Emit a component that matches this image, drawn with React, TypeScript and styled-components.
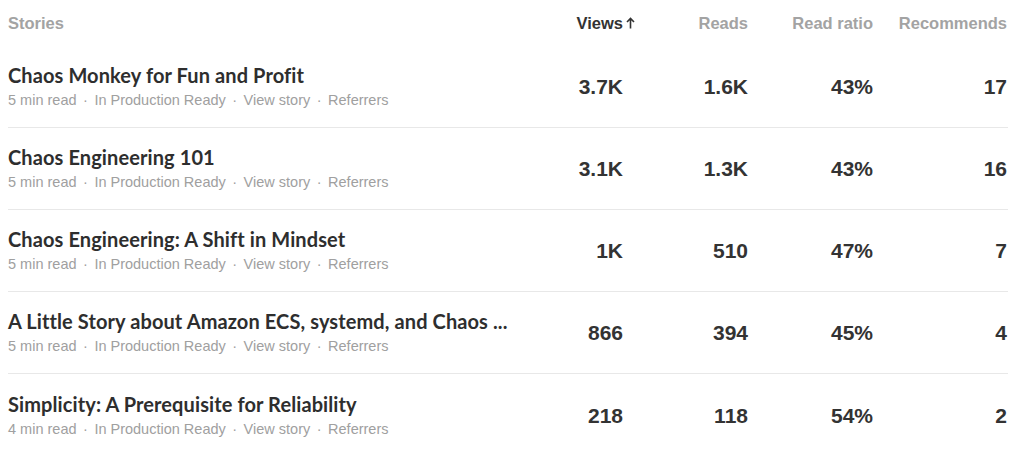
import React from "react";
import styled, { createGlobalStyle } from "styled-components";

const Global = createGlobalStyle`
  html, body { margin: 0; padding: 0; background: #fff; }
  body { font-family: "Liberation Sans", Arial, sans-serif; }
`;

const Table = styled.div`
  margin: 0 16px 0 8px;
  width: 1000px;
`;

const HeaderRow = styled.div`
  display: grid;
  grid-template-columns: 1fr 125px 125px 125px 135px;
  height: 46px;
  align-items: center;
  box-sizing: border-box;
`;

const HeadCell = styled.div<{ $active?: boolean; $left?: boolean; $pad?: number }>`
  position: relative;
  font-family: "Liberation Sans", Arial, sans-serif;
  font-weight: 700;
  font-size: 16.5px;
  color: ${(p) => (p.$active ? "#333" : "#a3a3a3")};
  text-align: ${(p) => (p.$left ? "left" : "right")};
  padding-right: ${(p) => p.$pad ?? 0}px;
`;

const SortArrow = styled.svg`
  position: absolute;
  right: -12px;
  top: 50%;
  margin-top: -6px;
  width: 9px;
  height: 12px;
`;

const Row = styled.div<{ $last?: boolean }>`
  display: grid;
  grid-template-columns: 1fr 125px 125px 125px 135px;
  height: 82px;
  align-items: center;
  box-sizing: border-box;
  border-bottom: ${(p) => (p.$last ? "none" : "1px solid #e8e8e8")};
`;

const StoryCell = styled.div`
  display: flex;
  flex-direction: column;
  gap: 4px;
  min-width: 0;
  margin-top: -1px;
`;

const Title = styled.div`
  font-family: Lato, "Liberation Sans", sans-serif;
  font-weight: 700;
  font-size: 20px;
  letter-spacing: 0.1px;
  color: #2e2e2e;
  white-space: nowrap;
  line-height: 24px;
`;

const Meta = styled.div`
  font-family: "Liberation Sans", Arial, sans-serif;
  font-size: 14.5px;
  color: #a0a0a0;
  line-height: 18px;
`;

const Dot = styled.span`
  padding: 0 6.5px;
`;

const Num = styled.div<{ $pad?: number }>`
  font-family: "Liberation Sans", Arial, sans-serif;
  font-weight: 700;
  font-size: 21px;
  color: #333;
  text-align: right;
  padding-right: ${(p) => p.$pad ?? 0}px;
  margin-top: 1px;
`;

const stories = [
  { title: "Chaos Monkey for Fun and Profit", read: 5, views: "3.7K", reads: "1.6K", ratio: "43%", rec: "17" },
  { title: "Chaos Engineering 101", read: 5, views: "3.1K", reads: "1.3K", ratio: "43%", rec: "16" },
  { title: "Chaos Engineering: A Shift in Mindset", read: 5, views: "1K", reads: "510", ratio: "47%", rec: "7" },
  { title: "A Little Story about Amazon ECS, systemd, and Chaos ...", read: 5, views: "866", reads: "394", ratio: "45%", rec: "4" },
  { title: "Simplicity: A Prerequisite for Reliability", read: 4, views: "218", reads: "118", ratio: "54%", rec: "2" },
];

export default function App() {
  return (
    <>
      <Global />
      <Table>
        <HeaderRow>
          <HeadCell $left>Stories</HeadCell>
          <HeadCell $active>
            Views
            <SortArrow viewBox="0 0 9 12" aria-hidden>
              <path d="M4.5 11.5V1.5M1 5l3.5-3.5L8 5" fill="none" stroke="#333" strokeWidth="1.6" />
            </SortArrow>
          </HeadCell>
          <HeadCell>Reads</HeadCell>
          <HeadCell>Read ratio</HeadCell>
          <HeadCell $pad={1}>Recommends</HeadCell>
        </HeaderRow>
        {stories.map((s, i) => (
          <Row key={s.title} $last={i === stories.length - 1}>
            <StoryCell>
              <Title>{s.title}</Title>
              <Meta>
                {s.read} min read<Dot>·</Dot>In Production Ready<Dot>·</Dot>View story<Dot>·</Dot>Referrers
              </Meta>
            </StoryCell>
            <Num>{s.views}</Num>
            <Num>{s.reads}</Num>
            <Num>{s.ratio}</Num>
            <Num $pad={1}>{s.rec}</Num>
          </Row>
        ))}
      </Table>
    </>
  );
}
